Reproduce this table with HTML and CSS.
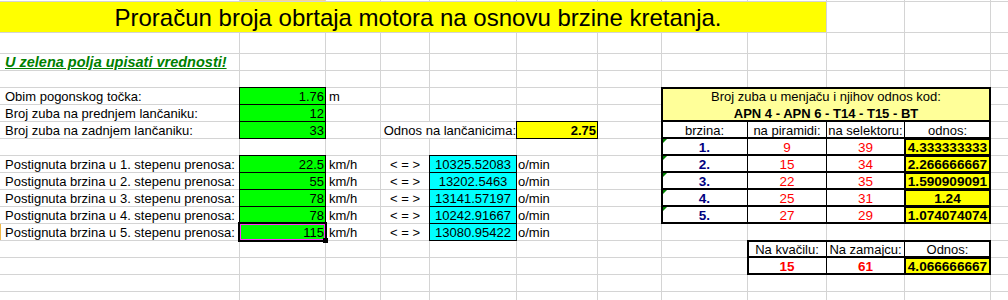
FILE: index.html
```html
<!DOCTYPE html>
<html lang="sr">
<head>
<meta charset="utf-8">
<title>Proračun broja obrtaja motora</title>
<link rel="stylesheet" href="styles.css">
</head>
<body>
<div class="sheet">
  <div class="y1 xB colhl"></div>
  <div class="ttl">Proračun broja obrtaja motora na osnovu brzine kretanja.</div>

  <div class="y4 xA note">U zelena polja upisati vrednosti!</div>

  <div class="y6 xA lbl">Obim pogonskog točka:</div>
  <div class="y6 xB inp box">1.76</div>
  <div class="y6 xC unit">m</div>

  <div class="y7 xA lbl">Broj zuba na prednjem lančaniku:</div>
  <div class="y7 xB inp box">12</div>

  <div class="y8 xA lbl">Broj zuba na zadnjem lančaniku:</div>
  <div class="y8 xB inp box">33</div>
  <div class="y8 sDE rlbl">Odnos na lančanicima:</div>
  <div class="y8 xF ratio box">2.75</div>

  <div class="y10 xA lbl">Postignuta brzina u 1. stepenu prenosa:</div>
  <div class="y10 xB inp box">22.5</div>
  <div class="y10 xC unit">km/h</div>
  <div class="y10 xD arr">&lt; = &gt;</div>
  <div class="y10 xE rpm box">10325.52083</div>
  <div class="y10 xF rpmu">o/min</div>

  <div class="y11 xA lbl">Postignuta brzina u 2. stepenu prenosa:</div>
  <div class="y11 xB inp box">55</div>
  <div class="y11 xC unit">km/h</div>
  <div class="y11 xD arr">&lt; = &gt;</div>
  <div class="y11 xE rpm box">13202.5463</div>
  <div class="y11 xF rpmu">o/min</div>

  <div class="y12 xA lbl">Postignuta brzina u 3. stepenu prenosa:</div>
  <div class="y12 xB inp box">78</div>
  <div class="y12 xC unit">km/h</div>
  <div class="y12 xD arr">&lt; = &gt;</div>
  <div class="y12 xE rpm box">13141.57197</div>
  <div class="y12 xF rpmu">o/min</div>

  <div class="y13 xA lbl">Postignuta brzina u 4. stepenu prenosa:</div>
  <div class="y13 xB inp box">78</div>
  <div class="y13 xC unit">km/h</div>
  <div class="y13 xD arr">&lt; = &gt;</div>
  <div class="y13 xE rpm box">10242.91667</div>
  <div class="y13 xF rpmu">o/min</div>

  <div class="y14 xA lbl rowhl">Postignuta brzina u 5. stepenu prenosa:</div>
  <div class="y14 xB inp box sel">115</div>
  <div class="y14 xC unit">km/h</div>
  <div class="y14 xD arr">&lt; = &gt;</div>
  <div class="y14 xE rpm box">13080.95422</div>
  <div class="y14 xF rpmu">o/min</div>

  <div class="hdr tb bl br bt bb">
    <div>Broj zuba u menjaču i njihov odnos kod:</div>
    <div class="bold">APN 4 - APN 6 - T14 - T15 - BT</div>
  </div>

  <div class="y8 xH tb bl bb ctr">brzina:</div>
  <div class="y8 xI tb bb ctr">na piramidi:</div>
  <div class="y8 xJ tb bb ctr">na selektoru:</div>
  <div class="y8 xK tb br bb ctr">odnos:</div>

  <div class="y9 xH tb bl bb ctr gear tri">1.</div>
  <div class="y9 xI tb bb ctr red">9</div>
  <div class="y9 xJ tb bb ctr red">39</div>
  <div class="y9 xK tb bl br bt bb ctr odn">4.333333333</div>

  <div class="y10 xH tb bl bb ctr gear tri">2.</div>
  <div class="y10 xI tb bb ctr red">15</div>
  <div class="y10 xJ tb bb ctr red">34</div>
  <div class="y10 xK tb bl br bt bb ctr odn">2.266666667</div>

  <div class="y11 xH tb bl bb ctr gear tri">3.</div>
  <div class="y11 xI tb bb ctr red">22</div>
  <div class="y11 xJ tb bb ctr red">35</div>
  <div class="y11 xK tb bl br bt bb ctr odn">1.590909091</div>

  <div class="y12 xH tb bl bb ctr gear tri">4.</div>
  <div class="y12 xI tb bb ctr red">25</div>
  <div class="y12 xJ tb bb ctr red">31</div>
  <div class="y12 xK tb bl br bt bb ctr odn">1.24</div>

  <div class="y13 xH tb bl bb ctr gear tri">5.</div>
  <div class="y13 xI tb bb ctr red">27</div>
  <div class="y13 xJ tb bb ctr red">29</div>
  <div class="y13 xK tb bl br bt bb ctr odn">1.074074074</div>

  <div class="y15 xI tb bl bt bb ctr">Na kvačilu:</div>
  <div class="y15 xJ tb bt bb ctr">Na zamajcu:</div>
  <div class="y15 xK tb br bt bb ctr">Odnos:</div>

  <div class="y16 xI tb bl bb ctr red bold">15</div>
  <div class="y16 xJ tb bb ctr red bold">61</div>
  <div class="y16 xK tb bl br bt bb ctr odn">4.066666667</div>
</div>
</body>
</html>
```

FILE: styles.css
```css
html, body {
  margin: 0;
  padding: 0;
  background: #fff;
  overflow: hidden;
}

.sheet {
  display: grid;
  width: 1008px;
  height: 300px;
  grid-template-columns: 239px 85px 54px 48px 86px 80px 63px 85px 78px 77px 85px 17px;
  grid-template-rows: 1px 30px 20px repeat(14, 16px) 8px;
  gap: 1px;
  font-family: "Liberation Sans", Arial, sans-serif;
  font-size: 13px;
  line-height: 17px;
  color: #000;
  background:
    linear-gradient(#d4d4d4, #d4d4d4) 239px 0 / 1px 100% no-repeat,
    linear-gradient(#d4d4d4, #d4d4d4) 325px 0 / 1px 100% no-repeat,
    linear-gradient(#d4d4d4, #d4d4d4) 380px 0 / 1px 100% no-repeat,
    linear-gradient(#d4d4d4, #d4d4d4) 429px 0 / 1px 100% no-repeat,
    linear-gradient(#d4d4d4, #d4d4d4) 516px 0 / 1px 100% no-repeat,
    linear-gradient(#d4d4d4, #d4d4d4) 597px 0 / 1px 100% no-repeat,
    linear-gradient(#d4d4d4, #d4d4d4) 661px 0 / 1px 100% no-repeat,
    linear-gradient(#d4d4d4, #d4d4d4) 747px 0 / 1px 100% no-repeat,
    linear-gradient(#d4d4d4, #d4d4d4) 826px 0 / 1px 100% no-repeat,
    linear-gradient(#d4d4d4, #d4d4d4) 904px 0 / 1px 100% no-repeat,
    linear-gradient(#d4d4d4, #d4d4d4) 990px 0 / 1px 100% no-repeat,
    linear-gradient(#d4d4d4, #d4d4d4) 0 1px / 100% 1px no-repeat,
    linear-gradient(#d4d4d4, #d4d4d4) 0 32px / 100% 1px no-repeat,
    linear-gradient(#d4d4d4, #d4d4d4) 0 53px / 100% 1px no-repeat,
    repeating-linear-gradient(transparent 0 16px, #d4d4d4 16px 17px) 0 54px / 100% 238px no-repeat,
    #fff;
}

.sheet > div {
  white-space: nowrap;
  min-width: 0;
}

/* grid rows */
.y1 { grid-row: 1; }
.y4 { grid-row: 4; }
.y6 { grid-row: 6; }
.y7 { grid-row: 7; }
.y8 { grid-row: 8; }
.y9 { grid-row: 9; }
.y10 { grid-row: 10; }
.y11 { grid-row: 11; }
.y12 { grid-row: 12; }
.y13 { grid-row: 13; }
.y14 { grid-row: 14; }
.y15 { grid-row: 15; }
.y16 { grid-row: 16; }

/* grid columns */
.xA { grid-column: 1; }
.xB { grid-column: 2; }
.xC { grid-column: 3; }
.xD { grid-column: 4; }
.xE { grid-column: 5; }
.xF { grid-column: 6; }
.xH { grid-column: 8; }
.xI { grid-column: 9; }
.xJ { grid-column: 10; }
.xK { grid-column: 11; }
.sDE { grid-column: 4 / 6; }

.colhl { background: #f7d592; }

.ttl {
  grid-row: 2;
  grid-column: 1 / 10;
  background: #ffff00;
  font-size: 24px;
  line-height: 30px;
  padding: 1px 0 0 10px;
  box-sizing: border-box;
  text-align: center;
}

.note {
  padding-left: 5px;
  font-size: 14.5px;
  font-weight: bold;
  font-style: italic;
  text-decoration: underline;
  color: #008000;
}

.lbl { padding-left: 5px; }
.rowhl { box-shadow: inset 1px 0 0 #f0b848; }

.box { box-shadow: 0 0 0 1px #000; }

.inp {
  background: #00ff00;
  text-align: right;
  padding-right: 1px;
}

.unit { padding-left: 3px; }
.arr { text-align: center; }

.rpm {
  background: #00ffff;
  text-align: center;
}

.rpmu { padding-left: 1px; }

.rlbl {
  background: #fff;
  text-align: right;
}

.ratio {
  background: #ffff00;
  font-weight: bold;
  text-align: right;
  padding-right: 1px;
}

/* selected cell */
.sel { position: relative; }
.sel::before {
  content: "";
  position: absolute;
  left: -2px;
  top: -2px;
  right: -2px;
  bottom: -2px;
  border: 2px solid #000;
  box-shadow: inset 0 0 0 1px #ff33ff;
}
.sel::after {
  content: "";
  position: absolute;
  right: -3px;
  bottom: -3px;
  width: 5px;
  height: 5px;
  background: #000;
}

/* bordered table cells */
.tb {
  --l: 0px;
  --r: 0px;
  --t: 0px;
  --b: 0px;
  box-shadow:
    0 0 0 1px #000,
    inset var(--l) 0 0 0 #000,
    inset calc(var(--r) * -1) 0 0 0 #000,
    inset 0 var(--t) 0 0 #000,
    inset 0 calc(var(--b) * -1) 0 0 #000;
}
.bl { --l: 1px; }
.br { --r: 1px; }
.bt { --t: 1px; }
.bb { --b: 1px; }

.hdr {
  grid-row: 6 / 8;
  grid-column: 8 / 12;
  background: #ffff99;
  text-align: center;
}

.ctr { text-align: center; }
.bold { font-weight: bold; }
.gear { color: #000080; font-weight: bold; font-size: 13.5px; }
.red { color: #ff0000; font-size: 13.5px; }
.odn { background: #ffff00; font-weight: bold; font-size: 13.6px; }

.tri { position: relative; }
.tri::before {
  content: "";
  position: absolute;
  left: 1px;
  top: 0;
  border-top: 4px solid #008000;
  border-right: 4px solid transparent;
}
```
